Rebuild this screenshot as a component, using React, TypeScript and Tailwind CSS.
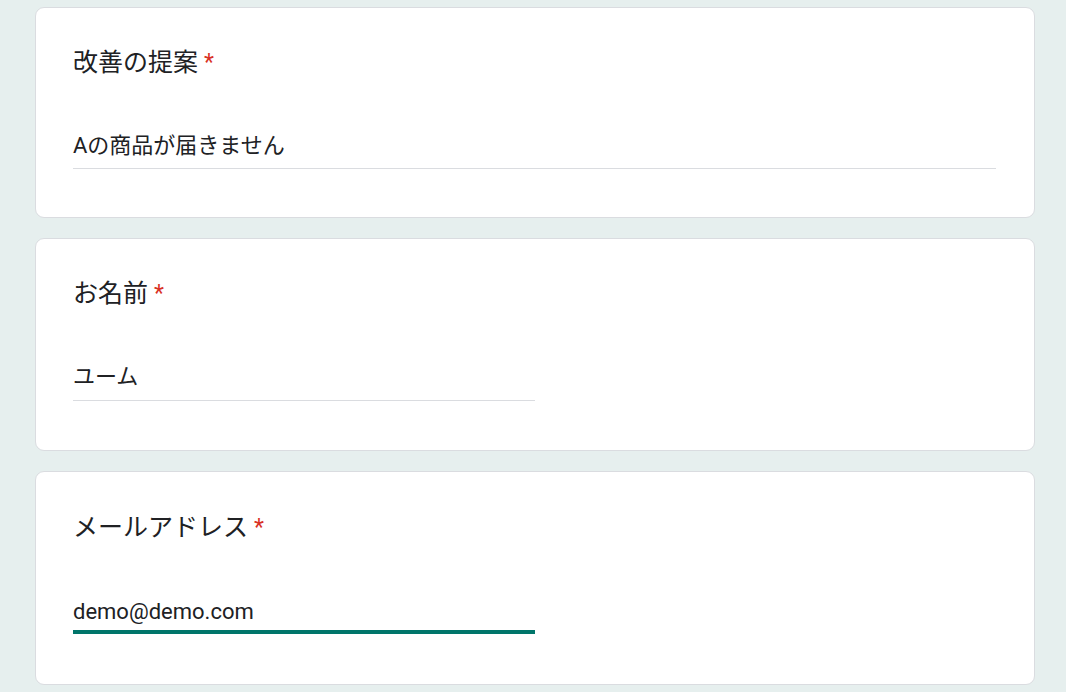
import React from "react";

const font = { fontFamily: 'Roboto, "Noto Sans CJK JP", sans-serif' };

function Card({
  label,
  value,
  full,
  focused,
  pt,
  mt,
  gapB,
  pb,
}: {
  label: string;
  value: string;
  full?: boolean;
  focused?: boolean;
  pt: string;
  mt: string;
  gapB: string;
  pb: string;
}) {
  return (
    <div className={`bg-white border border-[#dadce0] rounded-[9px] pl-[37px] pr-[38px] ${pt} ${pb}`}>
      <div className="text-[25px] leading-[30px] text-[#202124] flex items-start">
        <span>{label}</span>
        <span className="text-[#d93025] ml-[6px] text-[23px]">*</span>
      </div>
      <div className={`${mt} ${full ? "" : "w-[462px]"}`}>
        <div className={`text-[22px] leading-[30px] text-[#202124] ${gapB}`}>{value}</div>
        {focused ? (
          <div className="h-[4px] bg-[#00756a]"></div>
        ) : (
          <div className="h-px bg-[#dadce0]"></div>
        )}
      </div>
    </div>
  );
}

export default function App() {
  return (
    <div className="w-[1066px] h-[692px] overflow-hidden bg-[#e6efee]" style={font}>
      <div className="ml-[35px] w-[1000px] pt-[7px] flex flex-col gap-[20px]">
        <Card label="改善の提案" value="Aの商品が届きません" full pt="pt-[40px]" mt="mt-[53px]" gapB="pb-[7px]" pb="pb-[48px]" />
        <Card label="お名前" value="ユーム" pt="pt-[40px]" mt="mt-[53px]" gapB="pb-[8px]" pb="pb-[49px]" />
        <Card label="メールアドレス" value="demo@demo.com" focused pt="pt-[41px]" mt="mt-[54px]" gapB="pb-[3px]" pb="pb-[50px]" />
      </div>
    </div>
  );
}
